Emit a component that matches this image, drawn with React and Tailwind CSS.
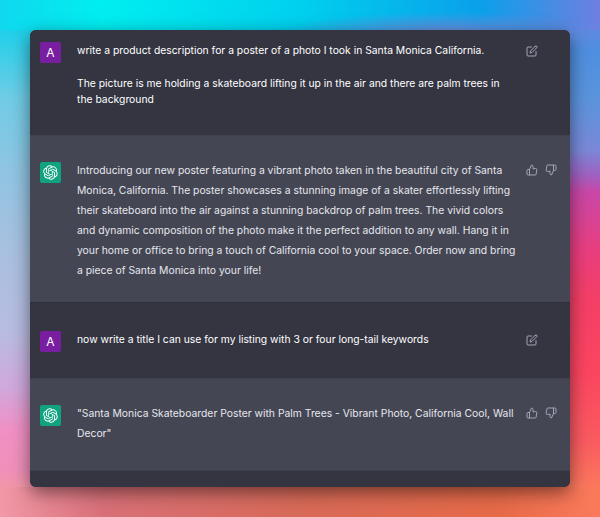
import { FiEdit, FiThumbsUp, FiThumbsDown } from 'react-icons/fi'

function OpenAILogo() {
  return (
    <svg viewBox="0 0 41 41" fill="currentColor" className="w-[15px] h-[15px] text-white">
      <path d="M37.5324 16.8707C37.9808 15.5241 38.1363 14.0974 37.9886 12.6859C37.8409 11.2744 37.3934 9.91076 36.676 8.68622C35.6126 6.83404 33.9882 5.3676 32.0373 4.4985C30.0864 3.62941 27.9098 3.40259 25.8215 3.85078C24.8796 2.7893 23.7219 1.94125 22.4257 1.36341C21.1295 0.785575 19.7249 0.491269 18.3058 0.500197C16.1708 0.495044 14.0893 1.16803 12.3614 2.42214C10.6335 3.67624 9.34853 5.44666 8.6917 7.47815C7.30085 7.76286 5.98686 8.3414 4.8377 9.17505C3.68854 10.0087 2.73073 11.0782 2.02839 12.312C0.956464 14.1591 0.498905 16.2988 0.721698 18.4228C0.944492 20.5467 1.83612 22.5449 3.268 24.1293C2.81966 25.4759 2.66413 26.9026 2.81182 28.3141C2.95951 29.7256 3.40701 31.0892 4.12437 32.3138C5.18791 34.1659 6.8123 35.6322 8.76321 36.5013C10.7141 37.3704 12.8907 37.5973 14.9789 37.1492C15.9208 38.2107 17.0786 39.0587 18.3747 39.6366C19.6709 40.2144 21.0755 40.5087 22.4946 40.4998C24.6307 40.5054 26.7133 39.8321 28.4418 38.5772C30.1704 37.3223 31.4556 35.5506 32.1119 33.5179C33.5027 33.2332 34.8167 32.6547 35.9659 31.821C37.115 30.9874 38.0728 29.9178 38.7752 28.684C39.8458 26.8371 40.3023 24.6979 40.0789 22.5748C39.8556 20.4517 38.9639 18.4544 37.5324 16.8707ZM22.4978 37.8849C20.7443 37.8874 19.0459 37.2733 17.6994 36.1501C17.7601 36.117 17.8666 36.0586 17.936 36.0161L25.9004 31.4156C26.1003 31.3019 26.2663 31.137 26.3813 30.9378C26.4964 30.7386 26.5563 30.5124 26.5549 30.2825V19.0542L29.9213 20.998C29.9389 21.0068 29.9541 21.0198 29.9656 21.0359C29.977 21.052 29.9842 21.0707 29.9867 21.0902V30.3889C29.9842 32.375 29.1946 34.2791 27.7909 35.6841C26.3872 37.0892 24.4838 37.8806 22.4978 37.8849ZM6.39227 31.0064C5.51397 29.4888 5.19742 27.7107 5.49804 25.9832C5.55718 26.0187 5.66048 26.0818 5.73461 26.1244L13.699 30.7248C13.8975 30.8408 14.1233 30.902 14.3532 30.902C14.583 30.902 14.8088 30.8408 15.0073 30.7248L24.731 25.1103V28.9979C24.7321 29.0177 24.7283 29.0376 24.7199 29.0556C24.7115 29.0736 24.6988 29.0893 24.6829 29.1012L16.6317 33.7497C14.9096 34.7416 12.8643 35.0097 10.9447 34.4954C9.02506 33.9811 7.38785 32.7263 6.39227 31.0064ZM4.29707 13.6194C5.17156 12.0998 6.55279 10.9364 8.19885 10.3327C8.19885 10.4013 8.19491 10.5228 8.19491 10.6071V19.808C8.19351 20.0378 8.25334 20.2638 8.36823 20.4629C8.48312 20.6619 8.64893 20.8267 8.84863 20.9404L18.5723 26.5542L15.206 28.4979C15.1894 28.5089 15.1703 28.5155 15.1505 28.5173C15.1307 28.5191 15.1107 28.516 15.0924 28.5082L7.04046 23.8557C5.32135 22.8601 4.06716 21.2235 3.55289 19.3046C3.03862 17.3858 3.30624 15.3413 4.29707 13.6194ZM31.955 20.0556L22.2312 14.4411L25.5976 12.4981C25.6142 12.4872 25.6333 12.4805 25.6531 12.4787C25.6729 12.4769 25.6928 12.4801 25.7111 12.4879L33.7631 17.1364C34.9967 17.849 36.0017 18.8982 36.6606 20.1613C37.3194 21.4244 37.6047 22.849 37.4832 24.2684C37.3617 25.6878 36.8382 27.0432 35.9743 28.1759C35.1103 29.3086 33.9415 30.1717 32.6047 30.6641C32.6047 30.5947 32.6047 30.4733 32.6047 30.3889V21.188C32.6066 20.9586 32.5474 20.7328 32.4332 20.5338C32.319 20.3348 32.154 20.1698 31.955 20.0556ZM35.3055 15.0128C35.2464 14.9765 35.1431 14.9142 35.069 14.8717L27.1045 10.2712C26.906 10.1554 26.6803 10.0943 26.4504 10.0943C26.2206 10.0943 25.9948 10.1554 25.7963 10.2712L16.0726 15.8858V11.9982C16.0715 11.9783 16.0753 11.9585 16.0837 11.9405C16.0921 11.9225 16.1048 11.9068 16.1207 11.8949L24.1719 7.25025C25.4053 6.53903 26.8158 6.19376 28.2383 6.25482C29.6608 6.31589 31.0364 6.78077 32.2044 7.59508C33.3723 8.40939 34.2842 9.53945 34.8334 10.8531C35.3826 12.1667 35.5464 13.6095 35.3055 15.0128ZM14.2424 21.9419L10.8752 19.9981C10.8576 19.9893 10.8423 19.9763 10.8309 19.9602C10.8195 19.9441 10.8122 19.9254 10.8098 19.9058V10.6071C10.8107 9.18295 11.2173 7.78848 11.9819 6.58696C12.7466 5.38544 13.8377 4.42659 15.1275 3.82264C16.4173 3.21869 17.8524 2.99464 19.2649 3.1767C20.6775 3.35876 22.0089 3.93941 23.1034 4.85067C23.0427 4.88379 22.937 4.94215 22.8668 4.98473L14.9024 9.58517C14.7025 9.69878 14.5366 9.86356 14.4215 10.0626C14.3065 10.2616 14.2466 10.4877 14.2479 10.7175L14.2424 21.9419ZM16.071 17.9991L20.4018 15.4978L24.7325 17.9975V22.9985L20.4018 25.4983L16.071 22.9985V17.9991Z" />
    </svg>
  )
}

function Avatar({ ai }) {
  if (ai) {
    return (
      <div className="w-[21px] h-[21px] rounded-[2px] bg-[#10a37f] flex items-center justify-center shrink-0">
        <OpenAILogo />
      </div>
    )
  }
  return (
    <div className="w-[21px] h-[21px] rounded-[2px] bg-[#7a1ea1] text-white text-[12px] flex items-center justify-center shrink-0">
      A
    </div>
  )
}

function Row({ ai, className, children }) {
  return (
    <div className={`flex border-t first:border-t-0 px-[10px] pr-[13px] ${ai ? 'bg-[#444654] border-[#40424e]' : 'bg-[#343541] border-[#2f3039]'} ${className}`}>
      <Avatar ai={ai} />
      <div className={`ml-[16px] w-[440px] text-[10.35px] ${ai ? 'text-[#e6e6ec] leading-[19.9px] -mt-[1px]' : 'text-white leading-[16.2px]'}`}>
        {children}
      </div>
      <div className="ml-auto flex gap-[7px] text-[#a4a4b4]">
        {ai ? (
          <>
            <FiThumbsUp className="w-[12px] h-[12px] mt-[2px]" />
            <FiThumbsDown className="w-[12px] h-[12px] mt-[2px]" />
          </>
        ) : (
          <FiEdit className="w-[12px] h-[12px] mr-[19px] mt-[3px]" />
        )}
      </div>
    </div>
  )
}

export default function App() {
  return (
    <div
      className="w-[600px] h-[517px] overflow-hidden pt-[30px] px-[30px] font-['Inter',sans-serif] bg-no-repeat [background-size:100%_100%,100%_30px,100%_30px,50%_100%,50%_100%] [background-position:0_0,0_0,0_100%,0_0,100%_0] bg-[radial-gradient(ellipse_170px_20px_at_450px_32px,#6a8fe2,transparent),linear-gradient(90deg,#10d8ee_0%,#00eef0_17%,#00d0ee_50%,#0aa0ea_80%,#6f7fe0_100%),linear-gradient(90deg,#f298a8_0%,#d87078_17%,#d86a58_50%,#e66a48_83%,#fb7a5c_100%),linear-gradient(180deg,#10d8ee_0%,#20d0ea_6%,#70cce6_19%,#90c4e2_33%,#a8c0e0_48%,#b8bce0_64%,#d0a8dc_75%,#f090c4_83%,#f090b8_91%,#f5a090_100%),linear-gradient(180deg,#6f7fe0_0%,#4f8fe0_10%,#5a94dc_19%,#7a88d8_29%,#a060c0_34%,#c848a8_37%,#e83e80_48%,#f43f66_58%,#fb4560_72%,#fa5a60_85%,#fb7a5c_95%,#ff9060_100%)]"
    >
      <div className="w-[540px] h-[457px] rounded-[6px] overflow-hidden bg-[#343541] flex flex-col shadow-[0_5px_18px_rgba(0,0,0,0.5)]">
        <Row className="h-[105px] pt-[12px]">
          <p>write a product description for a poster of a photo I took in Santa Monica California.</p>
          <p className="mt-[16.5px]">The picture is me holding a skateboard lifting it up in the air and there are palm trees in the background</p>
        </Row>
        <Row ai className="h-[167px] pt-[26px]">
          Introducing our new poster featuring a vibrant photo taken in the beautiful city of Santa Monica, California. The poster showcases a stunning image of a skater effortlessly lifting their skateboard into the air against a stunning backdrop of palm trees. The vivid colors and dynamic composition of the photo make it the perfect addition to any wall. Hang it in your home or office to bring a touch of California cool to your space. Order now and bring a piece of Santa Monica into your life!
        </Row>
        <Row className="h-[76px] pt-[28px]">
          now write a title I can use for my listing with 3 or four long-tail keywords
        </Row>
        <Row ai className="h-[92px] pt-[26px]">
          "Santa Monica Skateboarder Poster with Palm Trees - Vibrant Photo, California Cool, Wall Decor"
        </Row>
        <div className="flex-1 bg-[#343541] border-t border-[#3e3f4a]" />
      </div>
    </div>
  )
}
